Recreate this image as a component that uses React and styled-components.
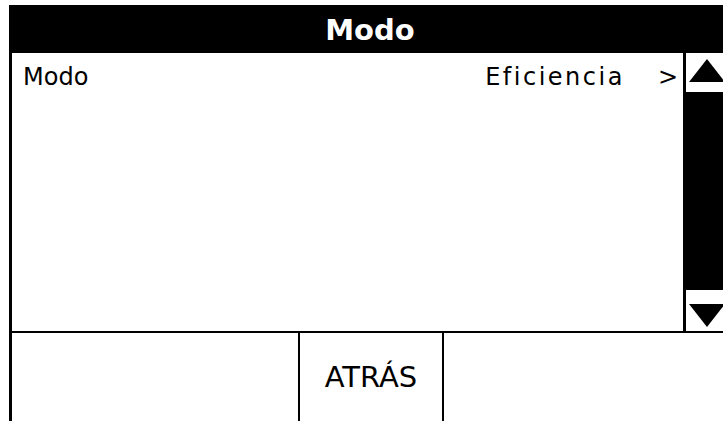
import React from 'react';
import styled, { createGlobalStyle } from 'styled-components';

const GlobalStyle = createGlobalStyle`
  html, body {
    margin: 0;
    padding: 0;
    background: #fff;
    overflow: hidden;
  }
`;

const Screen = styled.div`
  font-family: 'DejaVu Sans', 'Liberation Sans', sans-serif;
  width: 722px;
  margin: 5px 0 0 9px;
  display: flex;
  flex-direction: column;
  color: #000;
`;

const Header = styled.div`
  height: 48px;
  background: #000;
  color: #fff;
  font-size: 29px;
  font-weight: bold;
  display: flex;
  align-items: center;
  justify-content: center;
  padding-top: 2px;
  box-sizing: border-box;
`;

const Body = styled.div`
  height: 280px;
  display: flex;
  border-left: 3px solid #000;
  border-bottom: 2px solid #000;
  box-sizing: border-box;
`;

const List = styled.div`
  flex: 1;
  display: flex;
  flex-direction: column;
`;

const Row = styled.div`
  height: 46px;
  display: flex;
  align-items: center;
  justify-content: space-between;
  padding: 2px 5px 0 11px;
  box-sizing: border-box;
  font-size: 24px;
`;

const Label = styled.span`
  letter-spacing: ${props => props.spacing || 0}px;
`;

const Value = styled.span`
  display: flex;
  align-items: center;
  gap: 33px;
`;

const ScrollBar = styled.div`
  width: 48px;
  flex-shrink: 0;
  border-left: 3px solid #000;
  box-sizing: border-box;
  display: flex;
  flex-direction: column;
`;

const ArrowButton = styled.div`
  height: ${props => props.h}px;
  background: #fff;
  display: flex;
  align-items: ${props => (props.down ? 'flex-end' : 'flex-start')};
  padding: ${props => (props.down ? '0 0 4px 3px' : '6px 0 0 3px')};
  box-sizing: border-box;
`;

const Track = styled.div`
  flex: 1;
  background: #000;
`;

const Footer = styled.div`
  height: 100px;
  display: grid;
  grid-template-columns: 288px 144px 1fr;
  border-left: 3px solid #000;
`;

const Cell = styled.div`
  display: flex;
  align-items: center;
  justify-content: center;
  font-size: 29px;
  padding-bottom: 12px;
  border-right: ${props => (props.last ? 'none' : '2px solid #000')};
`;

function Triangle({ down }) {
  return (
    <svg width="36" height="23" viewBox="0 0 36 23">
      <polygon points={down ? '0,0 36,0 18,23' : '18,0 36,23 0,23'} fill="#000" />
    </svg>
  );
}

export default function App() {
  return (
    <>
      <GlobalStyle />
      <Screen>
        <Header>Modo</Header>
        <Body>
          <List>
            <Row>
              <Label>Modo</Label>
              <Value>
                <Label spacing={2.5}>Eficiencia</Label>
                <span>&gt;</span>
              </Value>
            </Row>
          </List>
          <ScrollBar>
            <ArrowButton h={39}>
              <Triangle />
            </ArrowButton>
            <Track />
            <ArrowButton h={41} down>
              <Triangle down />
            </ArrowButton>
          </ScrollBar>
        </Body>
        <Footer>
          <Cell />
          <Cell>ATRÁS</Cell>
          <Cell last />
        </Footer>
      </Screen>
    </>
  );
}
